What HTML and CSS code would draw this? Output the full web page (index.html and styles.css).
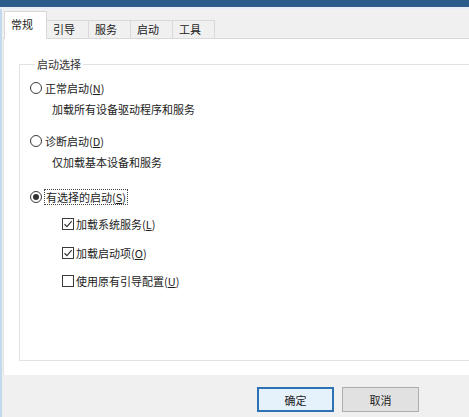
FILE: index.html
```html
<!DOCTYPE html>
<html lang="zh-CN">
<head>
<meta charset="utf-8">
<title>系统配置</title>
<link rel="stylesheet" href="styles.css">
</head>
<body>
<div class="window">
  <div class="titlebar"></div>
  <div class="frame">
    <div class="tabs">
      <div class="tab active">常规</div>
      <div class="tab">引导</div>
      <div class="tab">服务</div>
      <div class="tab">启动</div>
      <div class="tab">工具</div>
    </div>
    <div class="panel">
      <fieldset class="group">
        <legend class="legend">启动选择</legend>
        <div class="option">
          <span class="radio"></span>
          <span class="label">正常启动(<u>N</u>)</span>
        </div>
        <div class="desc">加载所有设备驱动程序和服务</div>
        <div class="option option-gap">
          <span class="radio"></span>
          <span class="label">诊断启动(<u>D</u>)</span>
        </div>
        <div class="desc">仅加载基本设备和服务</div>
        <div class="option option-gap2">
          <span class="radio checked"></span>
          <span class="label focus">有选择的启动(<u>S</u>)</span>
        </div>
        <div class="checks">
          <div class="check check-1">
            <span class="box"><svg viewBox="0 0 10 10" width="10" height="10"><path d="M1.5 5.2 L4 7.6 L8.7 2.2" fill="none" stroke="#333" stroke-width="1.2"/></svg></span>
            <span class="label">加载系统服务(<u>L</u>)</span>
          </div>
          <div class="check check-2">
            <span class="box"><svg viewBox="0 0 10 10" width="10" height="10"><path d="M1.5 5.2 L4 7.6 L8.7 2.2" fill="none" stroke="#333" stroke-width="1.2"/></svg></span>
            <span class="label">加载启动项(<u>O</u>)</span>
          </div>
          <div class="check check-3">
            <span class="box"></span>
            <span class="label">使用原有引导配置(<u>U</u>)</span>
          </div>
        </div>
      </fieldset>
    </div>
    <div class="footer">
      <button class="btn default">确定</button>
      <button class="btn">取消</button>
    </div>
  </div>
</div>
</body>
</html>
```

FILE: styles.css
```css
* { box-sizing: border-box; }

html, body {
  margin: 0;
  padding: 0;
}

body {
  width: 469px;
  height: 417px;
  overflow: hidden;
  background: #f0f0f0;
  font-family: "Noto Sans CJK SC", "Noto Sans", sans-serif;
  font-size: 11px;
  color: #222;
}

.window {
  display: flex;
  flex-direction: column;
  width: 469px;
  height: 417px;
}

.titlebar {
  height: 9px;
  background: #2b5c8c;
  border-bottom: 2px solid #e8eef5;
  flex: none;
}

.frame {
  flex: 1;
  display: flex;
  flex-direction: column;
  border-left: 2px solid #c3d9ee;
  background: #f0f0f0;
}

.tabs {
  height: 29px;
  display: flex;
  align-items: flex-end;
  padding-left: 2px;
  flex: none;
}

.tab {
  width: 43px;
  height: 18px;
  border: 1px solid #d9d9d9;
  border-bottom: none;
  margin-left: -1px;
  padding-left: 6px;
  line-height: 17px;
  background: #f0f0f0;
  position: relative;
}

.tab:first-child { margin-left: 0; }

.tab.active {
  height: 28px;
  line-height: 24px;
  background: #fff;
  margin-bottom: -1px;
  z-index: 1;
}

.panel {
  height: 337px;
  flex: none;
  background: #fff;
  border-top: 1px solid #d9d9d9;
  border-left: 1px solid #e3e3e3;
  margin-left: 1px;
  overflow: hidden;
  padding-top: 18px;
  padding-left: 15px;
}

.group {
  margin: 0;
  width: 520px;
  height: 304px;
  border: 1px solid #e2e2e2;
  padding: 9px 0 0 10px;
}

.legend {
  padding: 0 2px;
  margin-left: 5px;
  line-height: 14px;
  color: #333;
}

.option {
  display: flex;
  align-items: center;
  height: 16px;
  gap: 3px;
}

.option-gap { margin-top: 16px; }
.option-gap2 { margin-top: 19px; }

.radio {
  width: 12px;
  height: 12px;
  border: 1px solid #3a3a3a;
  border-radius: 50%;
  background: #fff;
  display: flex;
  align-items: center;
  justify-content: center;
  flex: none;
}

.radio.checked::after {
  content: "";
  width: 6px;
  height: 6px;
  border-radius: 50%;
  background: #333;
}

.label {
  line-height: 14px;
  white-space: nowrap;
}

.label.focus {
  outline: 1px dotted #444;
  outline-offset: 0;
  padding: 0 1px;
}

.desc {
  margin-top: 5px;
  padding-left: 22px;
  height: 16px;
  line-height: 16px;
}

.checks {
  padding-left: 32px;
}

.check {
  display: flex;
  align-items: center;
  height: 16px;
  gap: 2px;
}

.check-1 { margin-top: 11px; }
.check-2 { margin-top: 13px; }
.check-3 { margin-top: 12px; }

.box {
  width: 12px;
  height: 12px;
  border: 1px solid #3a3a3a;
  background: #fff;
  display: flex;
  align-items: center;
  justify-content: center;
  flex: none;
}

.footer {
  height: 42px;
  flex: none;
  display: flex;
  justify-content: flex-end;
  align-items: flex-start;
  gap: 8px;
  padding-top: 12px;
  padding-right: 50px;
  background: #f0f0f0;
}

.btn {
  width: 77px;
  height: 25px;
  font-family: inherit;
  font-size: 11px;
  color: #222;
  background: #e1e1e1;
  border: 1px solid #adadad;
  padding: 0;
  margin: 0;
}

.btn.default {
  background: #e5f1fb;
  border: 2px solid #2f72b3;
}
```
